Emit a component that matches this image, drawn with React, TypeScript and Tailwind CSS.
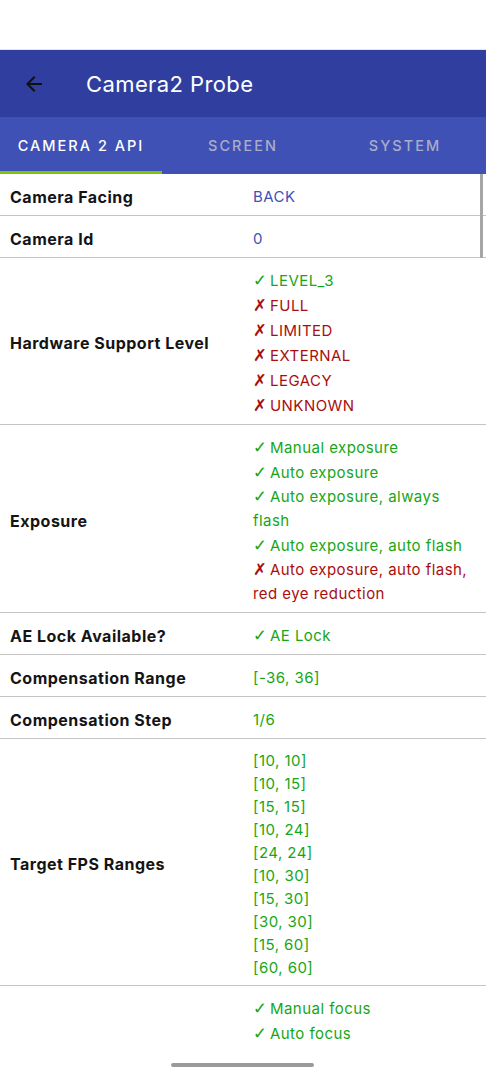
import React from "react";

type Item = { ok: boolean; text: string | string[]; lines?: number };

const font = { fontFamily: "Inter, 'DejaVu Sans', sans-serif" };

function Mark({ ok, lh }: { ok: boolean; lh: string }) {
  return (
    <span
      className={`w-[17px] shrink-0 ${lh} text-[16.5px] font-bold`}
      style={{ fontFamily: "'DejaVu Sans', sans-serif" }}
    >
      {ok ? "\u2713" : "\u2717"}
    </span>
  );
}

function CheckList({ items }: { items: Item[] }) {
  return (
    <div>
      {items.map((it, i) => {
        const color = it.ok ? "text-[#17a617]" : "text-[#a80e0e]";
        if (it.lines === 2 && Array.isArray(it.text)) {
          return (
            <div key={i} className={`flex flex-col ${color}`}>
              <div className="flex">
                <Mark ok={it.ok} lh="leading-[24px]" />
                <span className="leading-[24px]">{it.text[0]}</span>
              </div>
              <div className="leading-[24px]">{it.text[1]}</div>
            </div>
          );
        }
        return (
          <div key={i} className={`flex ${color}`}>
            <Mark ok={it.ok} lh="leading-[25px]" />
            <span className="leading-[25px]">{it.text}</span>
          </div>
        );
      })}
    </div>
  );
}

function Row({
  label,
  children,
  last,
}: {
  label: string;
  children: React.ReactNode;
  last?: boolean;
}) {
  return (
    <div
      className={`flex items-center min-h-[42px] pt-[10px] pb-[6px] ${
        last ? "" : "border-b border-[#c4c4c4]"
      }`}
    >
      <div className="w-[253px] shrink-0 pl-[10px] text-[16px] font-bold text-[#141414] tracking-[0.5px]">
        {label}
      </div>
      <div className="flex-1 pr-[8px] text-[15px] tracking-[0.45px]">{children}</div>
    </div>
  );
}

export default function App() {
  const fps = [
    "[10, 10]",
    "[10, 15]",
    "[15, 15]",
    "[10, 24]",
    "[24, 24]",
    "[10, 30]",
    "[15, 30]",
    "[30, 30]",
    "[15, 60]",
    "[60, 60]",
  ];
  return (
    <div className="w-[486px] h-[1080px] bg-white overflow-hidden relative" style={font}>
      <div className="h-[50px] bg-white border-b border-[#e6e6e6]" />
      <div className="h-[67px] bg-[#303f9f] flex items-center">
        <div className="w-[86px] pl-[22px] flex items-center">
          <svg width="24" height="24" viewBox="0 0 24 24">
            <path
              d="M20 11H7.83l5.59-5.59L12 4l-8 8 8 8 1.41-1.41L7.83 13H20v-2z"
              fill="#111"
            />
          </svg>
        </div>
        <div className="text-white text-[22px] tracking-[0.4px] pt-[1px]">Camera2 Probe</div>
      </div>
      <div className="h-[57px] bg-[#3f51b5] flex">
        <div className="w-[162px] flex flex-col">
          <div className="flex-1 flex items-center justify-center text-white text-[14.5px] font-medium tracking-[2px] pt-[3px]">
            CAMERA 2 API
          </div>
          <div className="h-[3px] bg-[#7cc40e]" />
        </div>
        <div className="w-[162px] flex items-center justify-center text-[#a8acc8] text-[14.5px] font-medium tracking-[2px] pt-[1px]">
          SCREEN
        </div>
        <div className="w-[162px] flex items-center justify-center text-[#a8acc8] text-[14.5px] font-medium tracking-[2px] pt-[1px]">
          SYSTEM
        </div>
      </div>

      <div className="relative">
        <div className="absolute right-[3px] top-0 w-[3px] h-[84px] bg-[#a6a6a6]" />
        <Row label="Camera Facing">
          <div className="leading-[25px] text-[#3f51b5]">BACK</div>
        </Row>
        <Row label="Camera Id">
          <div className="leading-[25px] text-[#3f51b5]">0</div>
        </Row>
        <Row label="Hardware Support Level">
          <CheckList
            items={[
              { ok: true, text: "LEVEL_3" },
              { ok: false, text: "FULL" },
              { ok: false, text: "LIMITED" },
              { ok: false, text: "EXTERNAL" },
              { ok: false, text: "LEGACY" },
              { ok: false, text: "UNKNOWN" },
            ]}
          />
        </Row>
        <Row label="Exposure">
          <CheckList
            items={[
              { ok: true, text: "Manual exposure" },
              { ok: true, text: "Auto exposure" },
              { ok: true, lines: 2, text: ["Auto exposure, always", "flash"] },
              { ok: true, text: "Auto exposure, auto flash" },
              {
                ok: false,
                lines: 2,
                text: ["Auto exposure, auto flash,", "red eye reduction"],
              },
            ]}
          />
        </Row>
        <Row label="AE Lock Available?">
          <CheckList items={[{ ok: true, text: "AE Lock" }]} />
        </Row>
        <Row label="Compensation Range">
          <div className="leading-[25px] text-[#17a617]">[-36, 36]</div>
        </Row>
        <Row label="Compensation Step">
          <div className="leading-[25px] text-[#17a617]">1/6</div>
        </Row>
        <Row label="Target FPS Ranges">
          <div className="text-[#17a617]">
            {fps.map((f) => (
              <div key={f} className="leading-[23px]">
                {f}
              </div>
            ))}
          </div>
        </Row>
        <Row label="" last>
          <CheckList
            items={[
              { ok: true, text: "Manual focus" },
              { ok: true, text: "Auto focus" },
            ]}
          />
        </Row>
      </div>

      <div className="absolute left-[171px] top-[1063px] w-[143px] h-[4px] rounded-full bg-[#9a9a9a]" />
    </div>
  );
}
